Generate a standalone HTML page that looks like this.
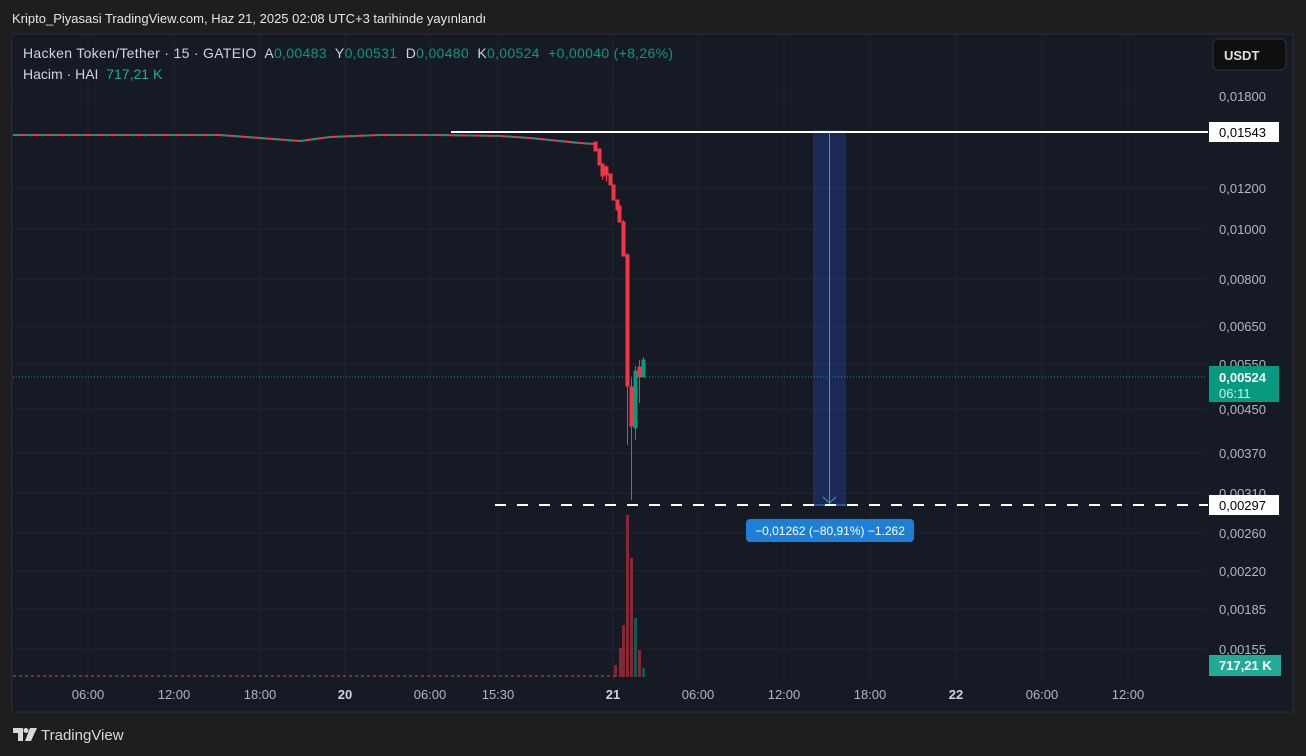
<!DOCTYPE html>
<html><head><meta charset="utf-8"><style>
body{margin:0;width:1306px;height:756px;background:#1e1e1e;overflow:hidden;font-family:"Liberation Sans",sans-serif;}
.t{position:absolute;white-space:nowrap}
text{white-space:pre}
</style></head><body>
<div class="t" style="left:12px;top:11px;font-size:13px;color:#e6e6e6;">Kripto_Piyasasi TradingView.com, Haz 21, 2025 02:08 UTC+3 tarihinde yayınlandı</div>
<svg style="position:absolute;left:0;top:0" width="1306" height="756" font-family="Liberation Sans, sans-serif" xml:space="preserve">
<rect x="12" y="34" width="1281" height="678" fill="#161a25" stroke="#2a2e39"/>
<g stroke="#20242f" stroke-width="1">
<line x1="13" x2="1206" y1="96" y2="96"/><line x1="13" x2="1206" y1="188" y2="188"/><line x1="13" x2="1206" y1="229" y2="229"/><line x1="13" x2="1206" y1="279" y2="279"/><line x1="13" x2="1206" y1="326" y2="326"/><line x1="13" x2="1206" y1="364" y2="364"/><line x1="13" x2="1206" y1="409" y2="409"/><line x1="13" x2="1206" y1="453" y2="453"/><line x1="13" x2="1206" y1="493" y2="493"/><line x1="13" x2="1206" y1="533" y2="533"/><line x1="13" x2="1206" y1="571" y2="571"/><line x1="13" x2="1206" y1="609" y2="609"/><line x1="13" x2="1206" y1="649" y2="649"/>
<line y1="35" y2="680" x1="88" x2="88"/><line y1="35" y2="680" x1="174" x2="174"/><line y1="35" y2="680" x1="260" x2="260"/><line y1="35" y2="680" x1="345" x2="345"/><line y1="35" y2="680" x1="430" x2="430"/><line y1="35" y2="680" x1="498" x2="498"/><line y1="35" y2="680" x1="613" x2="613"/><line y1="35" y2="680" x1="698" x2="698"/><line y1="35" y2="680" x1="784" x2="784"/><line y1="35" y2="680" x1="870" x2="870"/><line y1="35" y2="680" x1="956" x2="956"/><line y1="35" y2="680" x1="1042" x2="1042"/><line y1="35" y2="680" x1="1128" x2="1128"/>
</g>
<polyline fill="none" stroke="#f23645" stroke-width="2" points="13,135 150,135 220,135 260,138 300,141 330,137 380,135 440,135 500,136 530,138 560,141 580,143 594,144"/>
<polyline fill="none" stroke="#089981" stroke-width="2" stroke-dasharray="6 7" points="13,135 150,135 220,135 260,138 300,141 330,137 380,135 440,135 500,136 530,138 560,141 580,143 594,144"/>
<line x1="13" x2="1206" y1="377" y2="377" stroke="#089981" stroke-dasharray="1 2"/>
<g fill="#f23645" stroke="#f23645" stroke-width="1">
<rect x="594" y="142" width="3" height="9"/><rect x="598" y="149" width="3" height="16"/><rect x="601" y="164" width="3" height="12"/><line x1="602.5" x2="602.5" y1="164" y2="180"/>
<rect x="605" y="167" width="3" height="8"/><line x1="606.5" x2="606.5" y1="165" y2="182"/><rect x="609" y="174" width="3" height="11"/><rect x="612" y="185" width="3" height="15"/>
<rect x="616" y="200" width="3" height="10"/><rect x="618" y="206" width="3" height="16"/><rect x="622" y="222" width="3" height="34"/><line x1="623.5" x2="623.5" y1="220" y2="245"/>
<rect x="626" y="255" width="3" height="131"/><line x1="627.5" x2="627.5" y1="253" y2="445"/>
<rect x="630" y="387" width="3" height="39"/><line x1="631.5" x2="631.5" y1="378" y2="500"/>
<rect x="638" y="367" width="3" height="10"/><line x1="639.5" x2="639.5" y1="360" y2="403"/>
</g>
<g fill="#089981" stroke="#089981">
<rect x="634" y="371" width="3" height="57"/><line x1="635.5" x2="635.5" y1="366" y2="440"/>
<rect x="642" y="360" width="3" height="17"/><line x1="643.5" x2="643.5" y1="357" y2="362"/>
</g>
<line x1="13" x2="615" y1="676" y2="676" stroke="#f23645" stroke-opacity=".5" stroke-width="2" stroke-dasharray="3 3"/>
<g fill="#f23645" fill-opacity=".5">
<rect x="619" y="648" width="3" height="29"/><rect x="622" y="625" width="3" height="52"/><rect x="626" y="515" width="3" height="162"/><rect x="630" y="558" width="3" height="119"/><rect x="638" y="650" width="3" height="27"/><rect x="614" y="665" width="3" height="12"/>
</g>
<g fill="#089981" fill-opacity=".5"><rect x="634" y="618" width="3" height="59"/><rect x="642" y="668" width="3" height="9"/></g>
<rect x="813" y="130" width="33" height="375" fill="#2962ff" fill-opacity=".22"/>
<line x1="813" x2="846" y1="505" y2="505" stroke="#2196f3"/>
<line x1="829.5" x2="829.5" y1="131" y2="504" stroke="#4a90e2"/>
<path d="M823 497 L829.5 503 L836 497" fill="none" stroke="#4a90e2"/>
<line x1="451" x2="1208" y1="132" y2="132" stroke="#fff" stroke-width="2"/>
<line x1="495" x2="1208" y1="505" y2="505" stroke="#fff" stroke-width="2" stroke-dasharray="11 11"/>
<rect x="746" y="519" width="168" height="23" rx="4" fill="#1e7fd6"/>
<text x="830" y="535" font-size="12" fill="#fff" text-anchor="middle">−0,01262 (−80,91%) −1.262</text>
<g font-size="13" fill="#b2b5be">
<text x="1219" y="101">0,01800</text><text x="1219" y="193">0,01200</text><text x="1219" y="234">0,01000</text><text x="1219" y="284">0,00800</text><text x="1219" y="331">0,00650</text><text x="1219" y="369">0,00550</text><text x="1219" y="414">0,00450</text><text x="1219" y="458">0,00370</text><text x="1219" y="498">0,00310</text><text x="1219" y="538">0,00260</text><text x="1219" y="576">0,00220</text><text x="1219" y="614">0,00185</text><text x="1219" y="654">0,00155</text>
</g>
<rect x="1209" y="122" width="70" height="20" fill="#fff"/><text x="1219" y="137" font-size="13" fill="#000">0,01543</text>
<rect x="1209" y="495" width="70" height="20" fill="#fff"/><text x="1219" y="510" font-size="13" fill="#000">0,00297</text>
<rect x="1209" y="366" width="70" height="36" fill="#089981"/><text x="1219" y="382" font-size="13" fill="#fff" font-weight="bold">0,00524</text><text x="1219" y="398" font-size="13" fill="#d0efe9">06:11</text>
<rect x="1209" y="655" width="72" height="21" fill="#22ab94"/><text x="1219" y="670" font-size="13" fill="#fff" font-weight="bold">717,21 K</text>
<rect x="1213" y="39" width="73" height="31" rx="5" fill="#0f0f0f" stroke="#333"/><text x="1224" y="60" font-size="13" fill="#e0e0e0" font-weight="bold">USDT</text>
<g font-size="13" fill="#b2b5be" text-anchor="middle">
<text x="88" y="699">06:00</text><text x="174" y="699">12:00</text><text x="260" y="699">18:00</text><text x="345" y="699" font-weight="bold" fill="#d1d4dc">20</text><text x="430" y="699">06:00</text><text x="498" y="699">15:30</text><text x="613" y="699" font-weight="bold" fill="#d1d4dc">21</text><text x="698" y="699">06:00</text><text x="784" y="699">12:00</text><text x="870" y="699">18:00</text><text x="956" y="699" font-weight="bold" fill="#d1d4dc">22</text><text x="1042" y="699">06:00</text><text x="1128" y="699">12:00</text>
</g>
<text x="23" y="58" font-size="14" fill="#d1d4dc" textLength="650">Hacken Token/Tether · 15 · GATEIO  A<tspan fill="#089981">0,00483</tspan>  Y<tspan fill="#089981">0,00531</tspan>  D<tspan fill="#089981">0,00480</tspan>  K<tspan fill="#089981">0,00524  +0,00040 (+8,26%)</tspan></text>
<text x="23" y="79" font-size="14" fill="#d1d4dc">Hacim · HAI  <tspan fill="#22ab94">717,21 K</tspan></text>
<g fill="#d9d9d9"><path d="M13 728 H23 V741 H18 V733 H13 Z"/><circle cx="26" cy="730.5" r="2.5"/><path d="M30 728 H37 L31 741 H25 Z"/></g>
<text x="41" y="740" font-size="15" fill="#d9d9d9">TradingView</text>
</svg>
</body></html>
